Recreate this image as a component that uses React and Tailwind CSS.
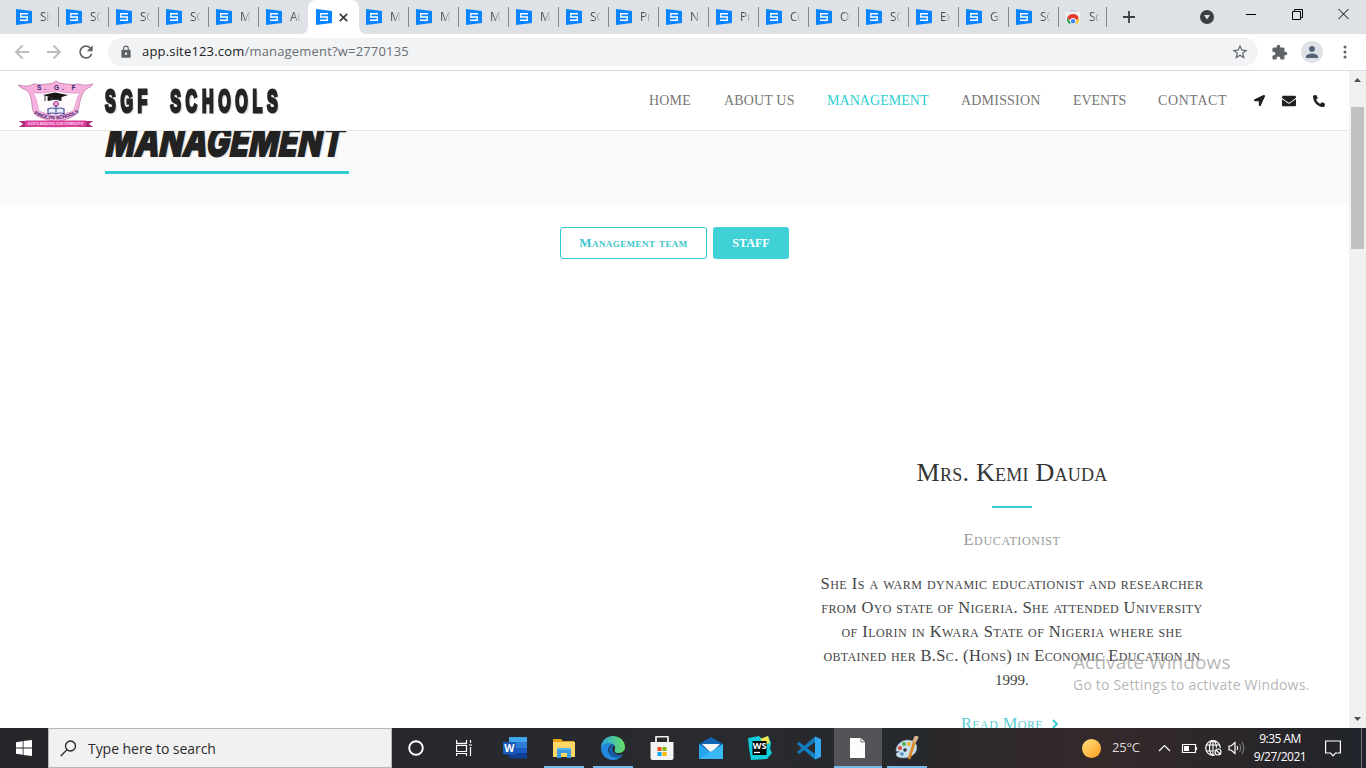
import React from "react";
import { FaLocationArrow, FaEnvelope, FaPhoneAlt } from "react-icons/fa";
import { MdExtension, MdStarBorder, MdLock, MdRefresh, MdPerson } from "react-icons/md";

const TABS = ["Sit", "SGF", "SGF", "SGF", "Ma", "Aut", null, "Ma", "Ma", "Ma", "Ma", "SGF", "Pro", "Nu", "Pro", "Co", "On", "SGF", "Ex", "Gra", "SGF"];

function SiteIcon() {
  return (
    <svg width="16" height="16" viewBox="0 0 16 16" className="shrink-0">
      <path d="M0 0L16 2V14L0 16Z" fill="#0a84ff" />
      <path d="M4 4H12V5.500H4ZM4 7.200H12V8.800H4ZM4 10.500H12V12H4Z" fill="#fff" />
      <path d="M4 5H5.500V8H4ZM10.500 8H12V11H10.500Z" fill="#fff" opacity=".8" />
    </svg>
  );
}

function StoreTabIcon() {
  return (
    <svg width="16" height="16" viewBox="0 0 16 16" className="shrink-0">
      <path d="M5.500 4V1.500H10.500V4" fill="none" stroke="#c4c7cb" />
      <path d="M1 3H15V14H1Z" fill="#eef0f2" />
      <path d="M2 9.500A6.300 6.300 0 0 1 14 9.500L11 11H5Z" fill="#e33b2e" />
      <path d="M2 8.500L6.500 14.500H3.500Q1.500 12 2 8.500Z" fill="#21a453" />
      <path d="M14 8.500L9.500 14.500H12.500Q14.500 12 14 8.500Z" fill="#fbc116" />
      <circle cx="8" cy="12" r="3" fill="#fff" />
      <circle cx="8" cy="12.300" r="2.200" fill="#4285f4" />
    </svg>
  );
}

function TabStrip() {
  return (
    <div className="flex h-[34px] bg-[#dee1e6] pl-[9px] font-['Open_Sans',sans-serif]">
      {TABS.map((t, i) =>
        t === null ? (
          <div key={i} className="relative -ml-px flex w-[51px] items-center rounded-t-lg bg-white pl-2">
            <svg width="67" height="8" viewBox="0 0 67 8" className="absolute bottom-0 -left-2">
              <path d="M0 8Q8 8 8 0V8ZM67 8Q59 8 59 0V8Z" fill="#fff" />
            </svg>
            <SiteIcon />
            <svg width="9" height="9" viewBox="0 0 9 9" className="ml-[7px]">
              <path d="M.8.8L8.2 8.2M8.2.8L.8 8.2" stroke="#3c4043" strokeWidth="1.8" />
            </svg>
          </div>
        ) : (
          <div key={i} className="flex w-[50px] items-center pl-[7px]">
            <SiteIcon />
            <span className="ml-2 w-[11px] overflow-hidden whitespace-nowrap bg-linear-to-r from-[#45494d] from-30% to-[#dee1e600] bg-clip-text text-[12px] tracking-[-0.3px] text-transparent">{t}</span>
            <span className={i === 5 ? "hidden" : "ml-auto h-5 w-px bg-[#85898e]"} />
          </div>
        )
      )}
      <div className="flex w-[48px] items-center pl-[6px]">
        <StoreTabIcon />
        <span className="ml-2 w-[11px] overflow-hidden whitespace-nowrap bg-linear-to-r from-[#45494d] from-30% to-[#dee1e600] bg-clip-text text-[12px] tracking-[-0.3px] text-transparent">Scr</span>
        <span className="ml-auto h-5 w-px bg-[#85898e]" />
      </div>
      <div className="ml-[16px] flex items-center">
        <svg width="12" height="12" viewBox="0 0 12 12">
          <path d="M6 0V12M0 6H12" stroke="#3c4043" strokeWidth="1.8" />
        </svg>
      </div>
      <div className="ml-auto flex">
        <svg width="14" height="14" viewBox="0 0 14 14" className="mt-[10px]">
          <circle cx="7" cy="7" r="7" fill="#3c4043" />
          <path d="M4 5H10L7 9.4Z" fill="#dee1e6" />
        </svg>
        <svg width="104" height="12" viewBox="0 0 104 12" className="mt-2 mr-[16px] ml-8" fill="none" stroke="#000">
          <path d="M0 6.5H10" />
          <path d="M46.5 3.5H54.5V11.500H46.5ZM48.5 3.500V1.500H56.5V9.500H54.5" />
          <path d="M92.500 1L102.500 11M102.500 1L92.500 11" />
        </svg>
      </div>
    </div>
  );
}

function AddressBar() {
  return (
    <div className="flex h-[37px] items-center border-b border-[#dadce0] bg-white pl-[14px]">
      <svg width="64" height="16" viewBox="0 0 64 16" fill="none" stroke="#babcbe" strokeWidth="1.8">
        <path d="M15 8H2M8.500 1.500L2 8L8.500 14.500" />
        <path d="M33 8H46M39.500 1.500L46 8L39.500 14.500" />
      </svg>
      <MdRefresh className="-ml-[2px] size-[20px] text-[#5f6368]" />
      <div className="ml-[12px] flex h-7 w-[1150px] items-center rounded-full bg-[#f1f3f4] pr-[9px] pl-[11px]">
        <MdLock className="size-[14px] text-[#5f6368]" />
        <span className="ml-[9px] font-['Open_Sans',sans-serif] text-[13px] tracking-[0.18px] whitespace-nowrap text-[#6a6e73]">
          <span className="text-[#202124]">app.site123.com</span>/management?w=2770135
        </span>
        <MdStarBorder className="ml-auto size-[18px] text-[#5f6368]" />
      </div>
      <MdExtension className="ml-[13px] size-[17px] text-[#5f6368]" />
      <span className="ml-[13px] flex size-[22px] items-center justify-center rounded-full bg-[#dee1e6]">
        <MdPerson className="size-[18px] text-[#56617a]" />
      </span>
      <svg width="4" height="14" viewBox="0 0 4 14" className="ml-5" fill="#5f6368">
        <circle cx="2" cy="2" r="1.5" />
        <circle cx="2" cy="7" r="1.5" />
        <circle cx="2" cy="12" r="1.5" />
      </svg>
    </div>
  );
}

function Crest() {
  return (
    <svg width="78" height="50" viewBox="0 0 78 50" className="mt-[8px] shrink-0 font-['Liberation_Sans',sans-serif]">
      <path d="M1 5C10 7 13 6 16 4Q25 5 31 4Q36 4 39 1Q42 4 48 4Q56 5 62 4C67 6 72 5 76 4C74 8 68 8 66 13C62 20 63 27 60 33Q57 38 39 42Q20 38 17 33C14 27 16 20 12 13C10 9 4 9 1 5Z" fill="#f7b1dc" stroke="#b978a4" strokeWidth=".8" />
      <path d="M16 13Q27 14 39 11Q51 14 63 13C59 18 59 25 56 31Q48 34 39 36Q30 34 22 31C20 25 20 18 16 13Z" fill="#fffafd" stroke="#cf8bb9" strokeWidth=".5" />
      <text x="20" y="10" fill="#30206c" fontSize="6.500" fontWeight="bold" letterSpacing="3" xmlSpace="preserve">S. G. F</text>
      <path d="M26 15L38 12.500L51 15L39 19Z" fill="#161616" />
      <path d="M31 17V20.500Q38 18 44 20.500V17L39 19ZM28 15.500V21" fill="#161616" stroke="#161616" strokeWidth=".9" />
      <circle cx="39" cy="24" r="2.500" fill="#efa5d3" stroke="#8c3c91" />
      <path d="M31 29Q35 27 39 29Q43 27 47 29V34Q43 32 39 34Q35 32 31 34Z" fill="#e9effb" stroke="#4b4c9c" strokeWidth="1.200" />
      <path d="M39 25V34" stroke="#4b4c9c" />
      <path id="crestArc" d="M17 34Q39 45 61 33" fill="none" />
      <text fill="#30206c" fontSize="4.900" fontWeight="bold">
        <textPath href="#crestArc">PINOLYN SCHOOLS</textPath>
      </text>
      <path d="M2 41H18V47H2L6 44ZM60 41H76L72 44L76 47H60Z" fill="#a92d7c" />
      <path d="M8 40.500H69V46.500Q39 48 8 46.500Z" fill="#dc3f9e" />
      <text x="11" y="45" fill="#fbd4ea" fontSize="3.600" fontWeight="bold" textLength="55">GOD&apos;S AMAZING OUR STRENGTH</text>
    </svg>
  );
}

const NAV = [
  ["HOME", "w-[43px] tracking-[0.2px]"],
  ["ABOUT US", "w-[71px] tracking-[0.15px]"],
  ["MANAGEMENT", "w-[102px] tracking-[0.05px] text-[#2ccfd3]"],
  ["ADMISSION", "w-[80px] tracking-[0.2px]"],
  ["EVENTS", "w-[53px] tracking-[-0.1px]"],
  ["CONTACT", "w-[70px] tracking-[0.6px]"],
];

function SiteHeader() {
  return (
    <header className="relative z-10 flex h-[60px] shrink-0 items-center border-b border-[#e7e7e7] bg-white pl-[17px]">
      <Crest />
      <div className="mt-[3px] ml-[10px] w-[180px]">
        <div className="origin-left scale-x-[0.52] font-['Liberation_Sans',sans-serif] text-[31px] leading-[40px] font-bold tracking-[8.9px] whitespace-pre text-[#252525] [-webkit-text-stroke:3px_#252525] [text-shadow:3px_2px_2px_#ccc]">SGF  SCHOOLS</div>
      </div>
      <nav className="ml-auto flex gap-8 font-['Liberation_Serif',serif] text-[14px] text-[#777]">
        {NAV.map(([t, c]) => (
          <a key={t} className={"whitespace-nowrap " + c}>{t}</a>
        ))}
      </nav>
      <div className="mr-[24px] ml-[26px] flex items-center gap-[17px] text-[#202020]">
        <FaLocationArrow className="size-[11px]" />
        <FaEnvelope className="size-[14px]" />
        <FaPhoneAlt className="size-[12px] -scale-x-100 rotate-90" />
      </div>
    </header>
  );
}

const BIO = [
  ["She Is a warm dynamic educationist and researcher", "tracking-[0.46px] text-[16.500px]"],
  ["from Oyo state of Nigeria. She attended University", "tracking-[0.38px] text-[16.500px]"],
  ["of Ilorin in Kwara State of Nigeria where she", "tracking-[0.44px] text-[16.500px]"],
  ["obtained her B.Sc. (Hons) in Economic Education in", "tracking-[0.34px] text-[16.500px]"],
  ["1999.", "text-[15px]"],
];

function SitePage() {
  return (
    <div className="flex min-w-0 flex-1 flex-col overflow-hidden bg-white">
      <SiteHeader />
      <section className="h-[73px] shrink-0 overflow-hidden bg-[#fafafa] pl-[105px]">
        <div className="-mt-[14px] h-[57px] w-[244px] border-b-3 border-[#31cbd1]">
          <h1 className="origin-bottom-left scale-x-[0.735] -skew-x-6 font-['Inter',sans-serif] text-[42px] leading-[48px] font-extrabold tracking-[0.5px] whitespace-nowrap text-[#222] italic [-webkit-text-stroke:2px_#222] [text-shadow:2px_1px_2px_#ccc]">MANAGEMENT</h1>
        </div>
      </section>
      <div className="mt-[23px] flex shrink-0 justify-center gap-[6px] font-['Liberation_Serif',serif] text-[13px] font-bold">
        <button className="h-8 w-[147px] rounded-[3px] border border-[#31cbd1] tracking-[0.42px] whitespace-nowrap text-[#3bc6cb] [font-variant:small-caps]">Management team</button>
        <button className="h-8 w-[76px] rounded-[3px] bg-[#3fd1d6] text-[12px] tracking-[0.1px] text-white">STAFF</button>
      </div>
      <article className="mt-[193px] ml-[812px] flex w-[400px] shrink-0 flex-col items-center font-['Liberation_Serif',serif] whitespace-nowrap [font-variant:small-caps]">
        <h2 className="h-[40px] text-[26px] leading-[42px] tracking-[0.25px] text-[#333]">Mrs. Kemi Dauda</h2>
        <div className="mt-[14px] h-[2px] w-10 bg-[#31cbd1]" />
        <p className="mt-[20px] text-[16.500px] leading-6 tracking-[0.65px] text-[#999]">Educationist</p>
        <div className="mt-[20px] flex flex-col items-center leading-6 text-[#444]">
          {BIO.map(([t, c]) => (
            <span key={t} className={"leading-6 " + c}>{t}</span>
          ))}
        </div>
        <a className="mt-[20px] -ml-[5px] flex items-center text-[16.500px] leading-6 tracking-[0.4px] text-[#5ccdd1]">
          Read More
          <svg width="6" height="10" viewBox="0 0 6 10" className="ml-[9px]">
            <path d="M1 1L5 5L1 9" fill="none" stroke="#31cbd1" strokeWidth="1.800" />
          </svg>
        </a>
      </article>
    </div>
  );
}

function Scrollbar() {
  return (
    <div className="flex w-[17px] shrink-0 flex-col items-center bg-[#f1f1f1]">
      <svg width="7" height="4" viewBox="0 0 7 4" className="mt-[7px]"><path d="M0 4L3.500 0L7 4Z" fill="#505050" /></svg>
      <div className="mt-[25px] h-[142px] w-[13px] bg-[#c1c1c1]" />
      <svg width="7" height="4" viewBox="0 0 7 4" className="mt-auto mb-[7px]"><path d="M0 0H7L3.500 4Z" fill="#505050" /></svg>
    </div>
  );
}

const APPS = [
  {
    id: "word",
    icon: (
      <>
        <path d="M6 1H24V7H6Z" fill="#41a5ee" /><path d="M6 6H24V12H6Z" fill="#2b7cd3" /><path d="M6 12H24V18H6Z" fill="#185abd" /><path d="M6 17H24V22.500H6Z" fill="#103f91" />
        <rect y="6" width="13" height="12.500" rx="1" fill="#185abd" />
        <text x="1.300" y="16" fill="#fff" fontSize="10.500" fontWeight="bold">W</text>
      </>
    ),
  },
  {
    id: "explorer", line: true,
    icon: (
      <>
        <path d="M1 3H9L11 5H22V20H1Z" fill="#e8a31b" /><path d="M1 6H23V21H1Z" fill="#ffd767" />
        <path d="M5 12H19V22H15V17H9V22H5Z" fill="#3c9ade" /><path d="M5 12H19V14H5Z" fill="#58b6ec" />
      </>
    ),
  },
  {
    id: "edge", line: true,
    icon: (
      <>
        <defs>
          <linearGradient id="eg" x1="0" x2="1"><stop stopColor="#2aa9e0" /><stop offset="1" stopColor="#66df62" /></linearGradient>
        </defs>
        <path d="M0 12C0 5 5 0 12 0C19 0 24 5 24 11C24 15 21 17 17 17C14 17 13 15 14 13C15 10 12 8 9 8C4 8 1 11 0 12Z" fill="url(#eg)" />
        <path d="M0 12C2 7 8 6 12 8C8 9 6 13 8 17C10 22 17 22 22 18C20 22 16 24 12 24C5 24 0 19 0 12Z" fill="#2289dc" />
        <path d="M12 8C6 11 7 18 12 21C16 23 20 21 22 18C19 20 14 19 12 15C11 12 12 10 14 10Z" fill="#155da5" />
      </>
    ),
  },
  {
    id: "store",
    icon: (
      <>
        <path d="M6 8V1Q6 .5 7 .5H17Q18 .5 18 1V8" fill="none" stroke="#eee" strokeWidth="1.800" />
        <path d="M.5 6H23.500V22Q23.500 24 21.500 24H2.500Q.5 24 .5 22Z" fill="#f4f4f4" />
        <path d="M7.500 11H11.500V15H7.500Z" fill="#f25022" /><path d="M12.500 11H16.500V15H12.500Z" fill="#7fba00" /><path d="M7.500 16H11.500V20H7.500Z" fill="#00a4ef" /><path d="M12.500 16H16.500V20H12.500Z" fill="#ffb900" />
      </>
    ),
  },
  {
    id: "mail",
    icon: (
      <>
        <path d="M0 8L12 1L24 8V12H0Z" fill="#1265b4" /><path d="M3 8H21L12 17Z" fill="#f7f7f7" />
        <path d="M0 8L13 17L24 23H0Z" fill="#24a5ed" /><path d="M24 8V23L0 23Z" fill="#39b8f4" />
      </>
    ),
  },
  {
    id: "webstorm",
    icon: (
      <>
        <path d="M0 2L11 0L14 3L20 0L23 7L22 13L24 17L19 23L3 24L1 12Z" fill="#10cbd9" /><path d="M12 3L20 0L22 7L16 8Z" fill="#f1e64d" />
        <path d="M4.500 5H18.500V19H4.500Z" fill="#050505" />
        <text x="4.800" y="12.500" fill="#fff" fontSize="8.500" fontWeight="bold" textLength="13.500" lengthAdjust="spacingAndGlyphs">WS</text>
        <path d="M6 16.500H12" stroke="#fff" strokeWidth="1.300" />
      </>
    ),
  },
  {
    id: "vscode",
    icon: (
      <>
        <path d="M0 8L2 6L18 18V23.500Z" fill="#1280c6" /><path d="M0 16L2 18L18 6V.5Z" fill="#1677b9" /><path d="M18 .5L24 3V21L18 23.500Z" fill="#2fa7f3" />
      </>
    ),
  },
  {
    id: "file", line: true, active: true,
    icon: (
      <>
        <path d="M4 2H15L19 6V22H4Z" fill="#fcfcfc" /><path d="M15 2V6H19" fill="none" stroke="#777" />
      </>
    ),
  },
  {
    id: "paint", line: true,
    icon: (
      <>
        <path d="M1 15C1 7 10 2 17 5C23 7 23 14 19 18C14 23 3 23 1 19Q1 16 5 16Q3 15 1 15Z" fill="#c9dfec" stroke="#91a8b6" strokeWidth=".7" />
        <circle cx="5" cy="12" r="2" fill="#d94438" /><circle cx="9" cy="8" r="2" fill="#55a94a" /><circle cx="14" cy="8" r="2" fill="#ebb72c" /><circle cx="10" cy="14" r="1.800" fill="#29323a" /><circle cx="7" cy="18" r="1.800" fill="#478ad0" />
        <path d="M21 1L14 23" stroke="#df8926" strokeWidth="2.800" /><path d="M22 0L19 6" stroke="#d8b18a" strokeWidth="4" />
      </>
    ),
  },
];

function Taskbar() {
  return (
    <footer className="flex h-10 items-stretch bg-linear-to-r from-[#25272b] via-[#282a2d] via-55% to-[#20242a] font-['Open_Sans',sans-serif] text-white">
      <div className="flex w-12 items-center justify-center">
        <svg width="16" height="16" viewBox="0 0 16 16" fill="#fff">
          <path d="M0 2.200L6.700 1.200V7.500H0ZM7.500 1.100L16 0V7.500H7.500ZM0 8.400H6.700V14.800L0 13.800ZM7.500 8.400H16V16L7.500 14.900Z" />
        </svg>
      </div>
      <div className="flex w-[344px] items-center border border-[#b9b9b9] bg-[#f1f1f1] pl-[11px]">
        <svg width="17" height="17" viewBox="0 0 17 17" fill="none" stroke="#222" strokeWidth="1.300">
          <circle cx="10.500" cy="6" r="5" /><path d="M7 9.600L.8 16" />
        </svg>
        <span className="ml-[11px] text-[14px] tracking-[-0.05px] whitespace-nowrap text-[#2b2b2b]">Type here to search</span>
      </div>
      <div className="flex w-12 items-center justify-center">
        <svg width="16" height="16" viewBox="0 0 16 16"><circle cx="8" cy="8" r="6.800" fill="none" stroke="#fff" strokeWidth="1.900" /></svg>
      </div>
      <div className="flex w-[50px] items-center pl-4">
        <svg width="16" height="16" viewBox="0 0 16 16" fill="none" stroke="#fff" strokeWidth="1.200">
          <path d="M.6 0V3.400H10.500V0M.6 5.400H10.500V11.500H.6ZM.6 16V13.500H10.500V16M14.500 0V3M14.500 7V16M13 5H16" />
        </svg>
      </div>
      {APPS.map((a) => (
        <div key={a.id} className={"flex flex-col items-center " + (a.active ? "ml-px w-12 bg-[#535457]" : "w-[49px]")}>
          <svg width="24" height="24" viewBox="0 0 24 24" className="mt-2 mb-[6px] shrink-0">{a.icon}</svg>
          {a.line && <div className={"h-[2px] bg-[#76b9ed] " + (a.active ? "w-full" : "w-10")} />}
        </div>
      ))}
      <div className="flex min-w-0 flex-1 items-center bg-linear-to-r from-[#2b2829] via-[#35292a] via-40% to-[#20242a]">
        <div className="ml-auto size-[19px] rounded-full bg-linear-to-br from-[#ffe17a] to-[#ff9b0b]" />
        <span className="ml-[11px] w-[36px] text-[13px] tracking-[-0.2px] whitespace-nowrap text-[#ddd]">25°C</span>
        <svg width="88" height="18" viewBox="0 0 88 18" className="ml-[10px]" fill="none" stroke="#fff" strokeWidth="1.200">
          <path d="M1 12L6.500 6.500L12 12" />
          <path d="M24.500 5.500H37.500V13.500H24.500ZM38.500 8V11" /><path d="M26 7H31V12H26Z" fill="#fff" stroke="none" />
          <circle cx="55" cy="9" r="7.300" /><ellipse cx="55" cy="9" rx="3.500" ry="7.300" /><path d="M48 6H62M48 12H58M55 2V16" />
          <circle cx="60" cy="13" r="4.500" fill="#292728" stroke="none" /><circle cx="60" cy="13" r="3" /><path d="M58 11L62 15" />
          <path d="M71 7H73L77 3.500V14.500L73 11H71Z" /><path d="M79 7Q80.500 9 79 11" /><path d="M81.500 5Q84 9 81.500 13M84 3Q87.500 9 84 15" stroke="#777" />
        </svg>
        <div className="ml-[5px] w-[58px] text-center text-[12px] leading-[18px] tracking-[-0.5px] whitespace-nowrap">
          <div>9:35 AM</div>
          <div>9/27/2021</div>
        </div>
        <svg width="16" height="17" viewBox="0 0 16 17" className="ml-[16px]" fill="none" stroke="#fff" strokeWidth="1.200">
          <path d="M.6 1H15.400V13H10.500L8 15.800L5.500 13H.6Z" />
        </svg>
        <div className="mr-[4px] ml-[20px] h-10 w-px bg-[#74767a]" />
      </div>
    </footer>
  );
}

export default function App() {
  return (
    <div className="relative flex h-[768px] w-[1366px] flex-col overflow-hidden bg-white">
      <TabStrip />
      <AddressBar />
      <main className="flex min-h-0 flex-1">
        <SitePage />
        <Scrollbar />
      </main>
      <Taskbar />
      <div className="pointer-events-none absolute top-[650px] left-[1073px] z-20 font-['Open_Sans',sans-serif] whitespace-nowrap text-[#a8a8a8]/85">
        <div className="text-[19px] leading-[25px] tracking-[0.1px]">Activate Windows</div>
        <div className="text-[14px] leading-[20px] tracking-[0.2px]">Go to Settings to activate Windows.</div>
      </div>
    </div>
  );
}
